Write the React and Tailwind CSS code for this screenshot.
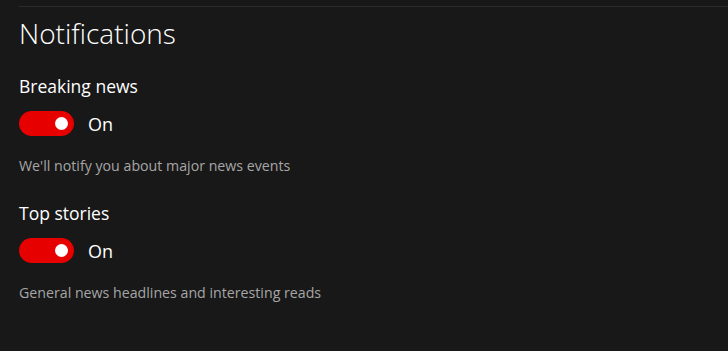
import React, { useState } from "react";

const Toggle = ({ on, onChange }) => (
  <button
    onClick={() => onChange(!on)}
    className={`flex h-[25px] w-[55px] items-center rounded-full px-[6px] ${on ? "justify-end bg-[#e60000]" : "justify-start border-2 border-white bg-transparent"}`}
  >
    <span className="block h-[13px] w-[13px] rounded-full bg-white" />
  </button>
);

const Setting = ({ title, desc, on, onChange }) => (
  <div className="flex flex-col">
    <h3 className="text-[17.5px] leading-[24px] text-white">{title}</h3>
    <div className="mt-[13px] flex items-center gap-[14px]">
      <Toggle on={on} onChange={onChange} />
      <span className="text-[18px] leading-[24px] text-white">{on ? "On" : "Off"}</span>
    </div>
    <p className="mt-[20px] text-[14.2px] leading-[20px] text-[#a6a6a6]">{desc}</p>
  </div>
);

export default function App() {
  const [breaking, setBreaking] = useState(true);
  const [top, setTop] = useState(true);

  return (
    <div className="h-[351px] w-full overflow-hidden bg-[#181818] pl-[19px] pt-[6px]" style={{ fontFamily: '"Open Sans", sans-serif' }}>
      <div className="border-t border-[#2b2b2b]" />
      <h2 className="mt-[8px] text-[28px] font-light leading-[36px] text-white">Notifications</h2>
      <div className="mt-[23px] flex flex-col gap-[25px]">
        <Setting
          title="Breaking news"
          desc="We'll notify you about major news events"
          on={breaking}
          onChange={setBreaking}
        />
        <Setting
          title="Top stories"
          desc="General news headlines and interesting reads"
          on={top}
          onChange={setTop}
        />
      </div>
    </div>
  );
}
